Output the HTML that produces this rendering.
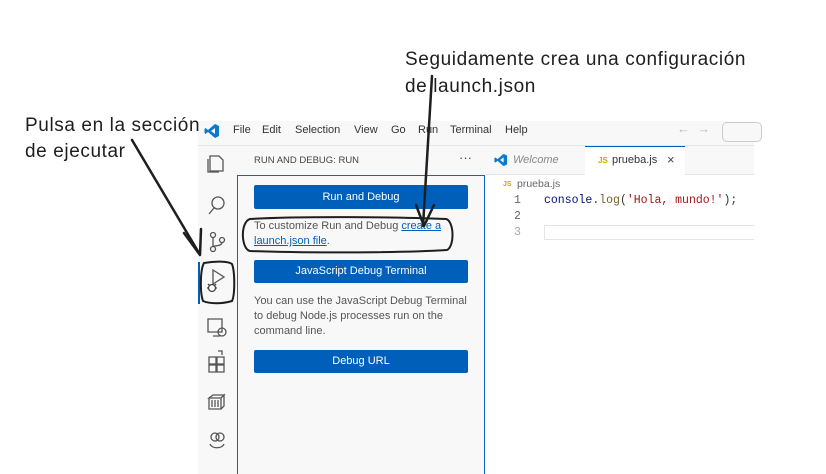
<!DOCTYPE html>
<html><head><meta charset="utf-8">
<style>
*{margin:0;padding:0;box-sizing:border-box}
body{width:826px;height:474px;background:#fff;position:relative;overflow:hidden;font-family:"Liberation Sans","DejaVu Sans",sans-serif}
.a{position:absolute}
.hand{font-family:"Liberation Sans",sans-serif;font-size:19px;color:#1e1e1e;letter-spacing:0.6px;white-space:nowrap}
.menu{font-size:11px;color:#333}
.btn{position:absolute;left:254px;width:214px;background:#005fb8;color:#fff;font-size:11px;text-align:center;border-radius:2px}
.txt{font-size:11px;color:#555;line-height:15px}
.mono{font-family:"Liberation Mono",monospace;font-size:11.5px}
</style></head><body>
<!-- window -->
<div class="a" style="left:198px;top:121px;width:556px;height:25px;background:#f8f8f8;border-bottom:1px solid #e5e5e5"></div>
<svg class="a" style="left:204px;top:123px" width="16" height="16" viewBox="0 0 16 16"><path d="M11 1 L15 3 V13 L11 15 L4 9 L1.5 11 L0.5 10 V6 L1.5 5 L4 7 Z M11 5 L7 8 L11 11 Z" fill="#0a7acc" fill-rule="evenodd"/></svg>
<div class="a menu" style="left:233px;top:124px">File</div>
<div class="a menu" style="left:262px;top:124px">Edit</div>
<div class="a menu" style="left:295px;top:124px">Selection</div>
<div class="a menu" style="left:354px;top:124px">View</div>
<div class="a menu" style="left:391px;top:124px">Go</div>
<div class="a menu" style="left:418px;top:124px">Run</div>
<div class="a menu" style="left:450px;top:124px">Terminal</div>
<div class="a menu" style="left:505px;top:124px">Help</div>
<div class="a" style="left:677px;top:121px;color:#bbb;font-size:13px">←&nbsp;&nbsp;→</div>
<div class="a" style="left:722px;top:122px;width:40px;height:20px;border:1px solid #ccc;border-radius:5px;background:#f8f8f8"></div>
<!-- activity bar -->
<div class="a" style="left:198px;top:146px;width:39px;height:328px;background:#f8f8f8"></div>
<div class="a" style="left:198px;top:262px;width:2px;height:42px;background:#005fb8"></div>
<svg class="a" style="left:205px;top:152px" width="24" height="320" fill="none" stroke="#555" stroke-width="1.3">
<path d="M5 4h9l4 4v11H5z M3 7v13h11"/>
<circle cx="13" cy="51" r="6"/><path d="M9 56l-5 6"/>
<circle cx="8" cy="83" r="2.5"/><circle cx="8" cy="97" r="2.5"/><circle cx="17" cy="88" r="2.5"/><path d="M8 85.5v9 M17 90.5c0 4-9 3-9 4"/>
<path d="M8 118l11 7-11 7z"/>
<path d="M3 167h14v13H3z M8 184h7"/><circle cx="17" cy="180" r="4"/>
<path d="M4 205h7v7H4z M12 205h7v7h-7z M4 213h7v7H4z M12 213h7v7h-7z M13 199l4 0 0 4"/>
<path d="M4 246l4-3h11l-3 3z M4 246v11h12v-11 M16 246l3-3v11l-3 3 M7 248v7 M10 248v7 M13 248v7"/>
<circle cx="10" cy="285" r="4"/><circle cx="15" cy="285" r="4"/><path d="M5 292c2 5 12 5 14 0"/>
</svg>
<svg class="a" style="left:205px;top:280px" width="14" height="14" fill="none" stroke="#444" stroke-width="1.3"><circle cx="7" cy="8" r="3.5"/><path d="M2 8h2 M10 8h2 M3 4l2 2 M11 4l-2 2"/></svg>
<!-- sidebar -->
<div class="a" style="left:237px;top:146px;width:248px;height:328px;background:#f8f8f8"></div>
<div class="a" style="left:254px;top:155px;font-size:9.5px;color:#444">RUN AND DEBUG: RUN</div>
<div class="a" style="left:459px;top:150px;font-size:13px;color:#444">···</div>
<div class="a" style="left:237px;top:175px;width:248px;height:299px;border:1px solid #0a66c2;border-bottom:none"></div>
<div class="btn" style="top:185px;height:24px;line-height:24px">Run and Debug</div>
<div class="a txt" style="left:254px;top:219px;width:210px">To customize Run and Debug <span style="color:#005fb8;text-decoration:underline">create a launch.json file</span>.</div>
<div class="btn" style="top:260px;height:23px;line-height:23px">JavaScript Debug Terminal</div>
<div class="a txt" style="left:254px;top:294px;width:214px">You can use the JavaScript Debug Terminal to debug Node.js processes run on the command line.</div>
<div class="btn" style="top:350px;height:23px;line-height:23px">Debug URL</div>
<!-- editor -->
<div class="a" style="left:485px;top:146px;width:269px;height:29px;background:#f8f8f8;border-bottom:1px solid #e5e5e5"></div>
<svg class="a" style="left:494px;top:153px" width="14" height="14" viewBox="0 0 16 16"><path d="M11 1 L15 3 V13 L11 15 L4 9 L1.5 11 L0.5 10 V6 L1.5 5 L4 7 Z M11 5 L7 8 L11 11 Z" fill="#0a7acc" fill-rule="evenodd"/></svg>
<div class="a" style="left:513px;top:154px;font-size:11px;color:#888;font-style:italic">Welcome</div>
<div class="a" style="left:585px;top:146px;width:100px;height:30px;background:#fff;border-top:1px solid #005fb8"></div>
<div class="a" style="left:598px;top:156px;font-size:8px;color:#c9a800;font-weight:bold">JS</div>
<div class="a" style="left:612px;top:154px;font-size:11px;color:#333">prueba.js</div>
<div class="a" style="left:667px;top:152px;font-size:13px;color:#444">×</div>
<div class="a" style="left:503px;top:181px;font-size:7px;color:#c9a800;font-weight:bold">JS</div>
<div class="a" style="left:517px;top:178px;font-size:10.5px;color:#666">prueba.js</div>
<div class="a mono" style="left:514px;top:194px;color:#666">1</div>
<div class="a mono" style="left:514px;top:210px;color:#666">2</div>
<div class="a mono" style="left:514px;top:226px;color:#aaa">3</div>
<div class="a mono" style="left:544px;top:194px;color:#001080"><span style="color:#001080">console</span><span style="color:#333">.</span><span style="color:#795e26">log</span><span style="color:#333">(</span><span style="color:#a31515">'Hola, mundo!'</span><span style="color:#333">);</span></div>
<div class="a" style="left:544px;top:225px;width:210px;height:15px;border:1px solid #e5e5e5;border-right:none"></div>
<!-- annotations -->
<div class="a hand" style="left:405px;top:49px">Seguidamente crea una configuración</div>
<div class="a hand" style="left:405px;top:76px">de launch.json</div>
<div class="a hand" style="left:25px;top:115px">Pulsa en la sección</div>
<div class="a hand" style="left:25px;top:141px">de ejecutar</div>
<svg class="a" style="left:0;top:0" width="826" height="474" fill="none" stroke="#1e1e1e" stroke-width="2.5" stroke-linecap="round" stroke-linejoin="round">
<path d="M432 76 L423 226"/>
<path d="M416 205 L424 226 L434 205"/>
<path d="M132 140 L199 253"/>
<path d="M184 233 L200 255 L201 229"/>
<path d="M250 219 C300 216 400 217 446 219 C454 221 455 246 447 250 C400 253 300 253 250 251 C241 249 240 222 250 219 Z" stroke-width="2"/>
<path d="M204 263 C215 261 228 261 232 264 C235 272 235 295 232 301 C222 304 210 304 203 301 C200 293 200 270 204 263 Z" stroke-width="2"/>
</svg>
</body></html>
